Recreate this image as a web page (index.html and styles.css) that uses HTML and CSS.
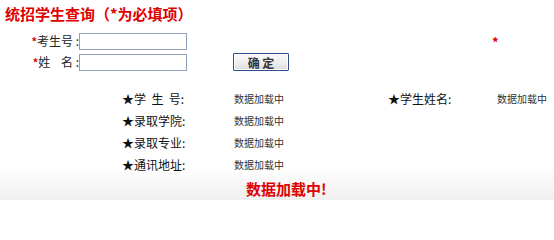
FILE: index.html
```html
<!DOCTYPE html>
<html lang="zh">
<head>
<meta charset="utf-8">
<title>统招学生查询</title>
<link rel="stylesheet" href="styles.css">
</head>
<body>
<div class="page">
  <h1 class="title">统招学生查询（*为必填项）</h1>
  <div class="form">
    <div class="fields">
      <div class="row">
        <label class="lbl"><span class="req">*</span>考生号 :</label>
        <input class="inp" type="text">
      </div>
      <div class="row">
        <label class="lbl"><span class="req">*</span>姓&nbsp;&nbsp;&nbsp;&nbsp;名 :</label>
        <input class="inp" type="text">
      </div>
    </div>
    <button class="btn" type="button">确 定</button>
    <span class="req star-right">*</span>
  </div>
  <div class="info">
    <span class="k">★学&nbsp;&nbsp;生&nbsp;&nbsp;号:</span><span class="v">数据加载中</span>
    <span class="k">★学生姓名:</span><span class="v">数据加载中</span>
    <span class="k">★录取学院:</span><span class="v">数据加载中</span>
    <span class="k"></span><span class="v"></span>
    <span class="k">★录取专业:</span><span class="v">数据加载中</span>
    <span class="k"></span><span class="v"></span>
    <span class="k">★通讯地址:</span><span class="v">数据加载中</span>
    <span class="k"></span><span class="v"></span>
  </div>
  <div class="msg">数据加载中!</div>
</div>
</body>
</html>
```

FILE: styles.css
```css
html {
  background: #ffffff;
}
html, body {
  margin: 0;
  padding: 0;
}
body {
  width: 554px;
  height: 200px;
  overflow: hidden;
  font-family: "Noto Sans CJK SC", "DejaVu Sans", sans-serif;
  background: linear-gradient(to bottom, #ffffff 0, #ffffff 166px, #f0f0f0 200px);
  color: #000;
}
.page {
  padding-top: 5px;
}
.title {
  margin: 0 0 0 5px;
  font-size: 15px;
  line-height: 18px;
  font-weight: bold;
  color: #e00000;
}
.form {
  display: flex;
  margin-top: 9px;
  padding-left: 26px;
}
.fields {
  display: flex;
  flex-direction: column;
  gap: 3px;
}
.row {
  display: flex;
  align-items: center;
}
.lbl {
  width: 53px;
  text-align: right;
  font-size: 12px;
  line-height: 17px;
  color: #222;
  white-space: nowrap;
}
.req {
  color: #e00000;
  font-size: 11px;
  font-weight: bold;
}
.inp {
  box-sizing: border-box;
  width: 108px;
  height: 17px;
  margin: 0;
  padding: 0 2px;
  border: 1px solid #8e9fb8;
  background: #fff;
  font-size: 12px;
}
.btn {
  box-sizing: border-box;
  align-self: flex-end;
  width: 56px;
  height: 18px;
  margin: 0 0 0 46px;
  padding: 0;
  border: 1px solid #2f4c8e;
  border-radius: 1px;
  background: linear-gradient(to bottom, #fafafa 0, #ececec 60%, #dcdcdc 100%);
  box-shadow: inset 0 0 0 1px #ffffff;
  font-family: "Noto Sans CJK SC", sans-serif;
  font-size: 12px;
  line-height: 15px;
  font-weight: bold;
  color: #333;
}
.star-right {
  margin-left: 203px;
  margin-top: 1px;
  line-height: 17px;
  font-size: 13px;
}
.info {
  display: grid;
  grid-template-columns: 112px 154px 109px 1fr;
  grid-auto-rows: 22px;
  align-items: center;
  margin-top: 16px;
  padding-left: 122px;
}
.k {
  font-size: 12px;
  color: #111;
  white-space: nowrap;
}
.v {
  font-size: 10px;
  color: #333;
  white-space: nowrap;
}
.msg {
  margin-top: 4px;
  padding-left: 246px;
  font-size: 15px;
  line-height: 20px;
  font-weight: bold;
  color: #e00000;
}
```
